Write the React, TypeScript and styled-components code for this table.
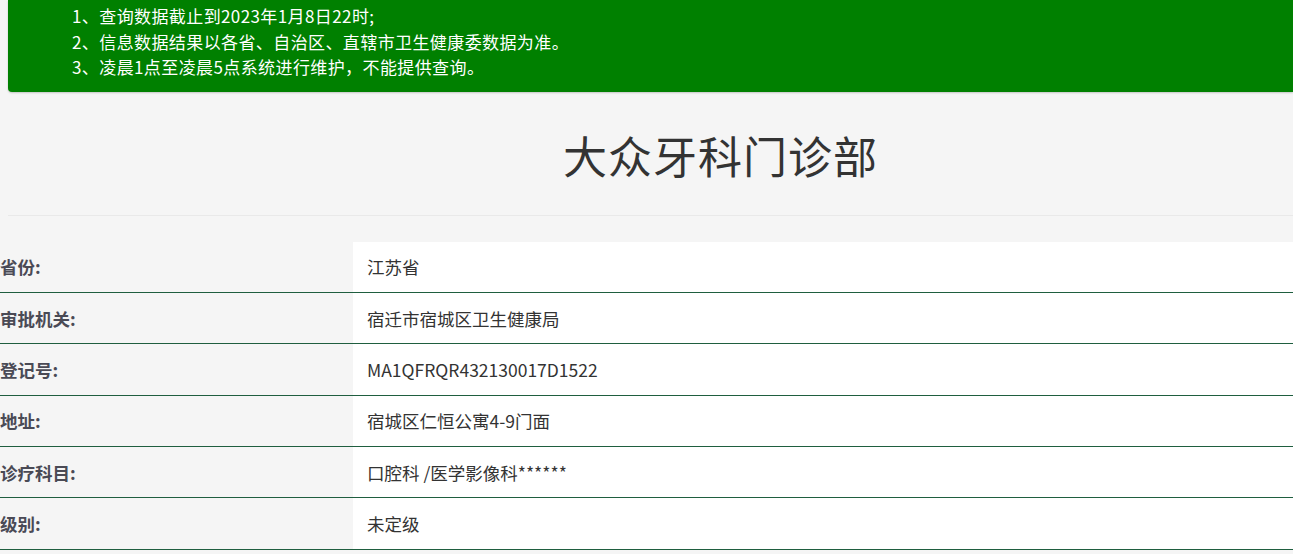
import React from "react";
import styled, { createGlobalStyle } from "styled-components";

const Global = createGlobalStyle`
  html, body { margin: 0; padding: 0; background: #f5f5f5; }
  body { font-family: "Noto Sans CJK SC", "Noto Sans", sans-serif; overflow: hidden; }
`;

const Banner = styled.div`
  margin-left: 8px;
  background: #008000;
  color: #fff;
  border-radius: 0 0 0 4px;
  box-shadow: 0 1px 2px rgba(0,0,0,0.2);
  padding: 3px 0 12px 64px;
  font-size: 17px;
  line-height: 25.5px;
`;

const Line = styled.div`
  white-space: nowrap;
  letter-spacing: 0.4px;
`;

const Header = styled.div`
  margin-left: 8px;
  border-bottom: 1px solid #e9e9e9;
  height: 123px;
  display: flex;
  align-items: center;
  justify-content: center;
  padding-left: 140px;
`;

const Title = styled.h1`
  margin: 0;
  font-weight: 400;
  font-size: 44px;
  color: #333;
  letter-spacing: 1px;
  position: relative;
  top: 2px;
`;

const Table = styled.div`
  margin-top: 26px;
`;

const Row = styled.div`
  display: grid;
  grid-template-columns: 353px 1fr;
  border-bottom: 1px solid #1f5e3f;
  height: 50.4px;
`;

const Label = styled.div`
  display: flex;
  align-items: center;
  font-weight: 700;
  font-size: 17.5px;
  color: #4a4a55;
  background: #f5f5f5;
`;

const Value = styled.div`
  display: flex;
  align-items: center;
  padding-left: 14px;
  font-size: 17.5px;
  color: #333;
  background: #fff;
`;

const rows: [string, string][] = [
  ["省份:", "江苏省"],
  ["审批机关:", "宿迁市宿城区卫生健康局"],
  ["登记号:", "MA1QFRQR432130017D1522"],
  ["地址:", "宿城区仁恒公寓4-9门面"],
  ["诊疗科目:", "口腔科 /医学影像科******"],
  ["级别:", "未定级"],
];

export default function App() {
  return (
    <>
      <Global />
      <Banner>
        <Line>1、查询数据截止到2023年1月8日22时;</Line>
        <Line>2、信息数据结果以各省、自治区、直辖市卫生健康委数据为准。</Line>
        <Line>3、凌晨1点至凌晨5点系统进行维护，不能提供查询。</Line>
      </Banner>
      <Header>
        <Title>大众牙科门诊部</Title>
      </Header>
      <Table>
        {rows.map(([l, v]) => (
          <Row key={l}>
            <Label>{l}</Label>
            <Value>{v}</Value>
          </Row>
        ))}
      </Table>
    </>
  );
}
